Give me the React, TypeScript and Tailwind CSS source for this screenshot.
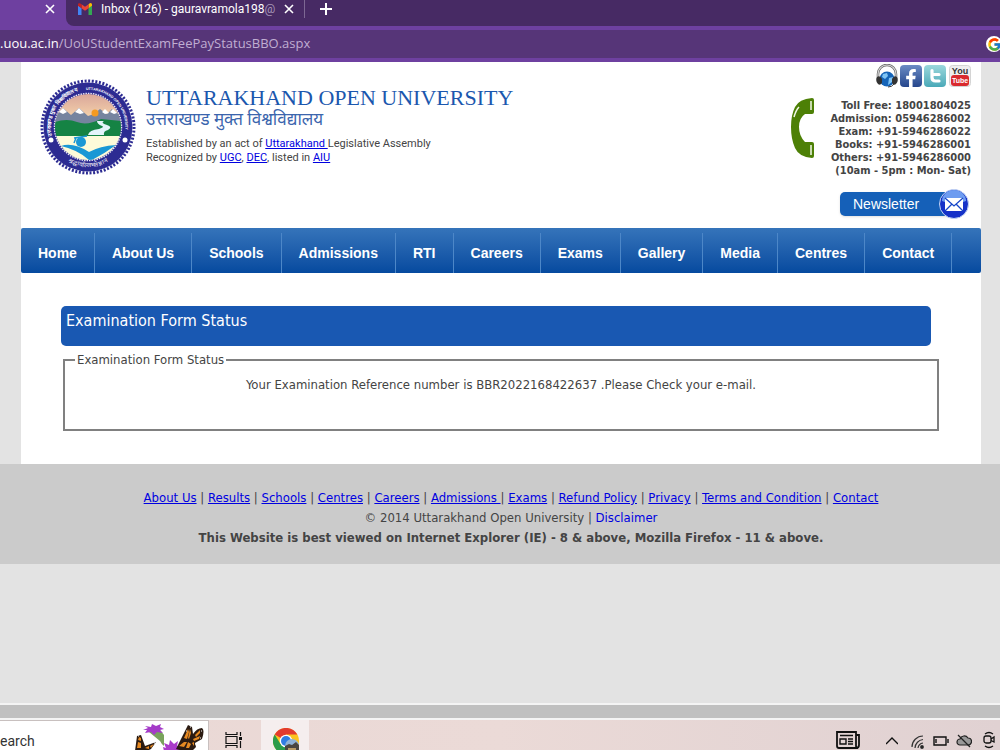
import React from "react"
import { FcGoogle } from "react-icons/fc"
import { FaFacebookF } from "react-icons/fa"

const navLinks = [
  "Home",
  "About Us",
  "Schools",
  "Admissions",
  "RTI",
  "Careers",
  "Exams",
  "Gallery",
  "Media",
  "Centres",
  "Contact",
]

const footerLinks = [
  "About Us",
  "Results",
  "Schools",
  "Centres",
  "Careers",
  "Admissions ",
  "Exams",
  "Refund Policy",
  "Privacy",
  "Terms and Condition",
  "Contact",
]

const phoneLines = [
  "Toll Free: 18001804025",
  "Admission: 05946286002",
  "Exam: +91-5946286022",
  "Books: +91-5946286001",
  "Others: +91-5946286000",
  "(10am - 5pm : Mon- Sat)",
]

const CloseIcon = () => (
  <svg className="h-3 w-3" viewBox="0 0 12 12" stroke="#fff" strokeWidth="1.600">
    <path d="M2 2l8 8M10 2l-8 8" />
  </svg>
)

const GmailIcon = () => (
  <svg className="h-3 w-4 shrink-0" viewBox="0 0 16 12">
    <path d="M1 12V2.500L4.500 5v7z" fill="#4285f4" />
    <path d="M11.500 12V5L15 2.500V12z" fill="#34a853" />
    <path d="M11.500 5.200V1.200l1.300-.9A1.500 1.500 0 0 1 15 1.600v1.200z" fill="#fbbc04" />
    <path d="M4.500 5.200v-4L8 3.800l3.500-2.600v4L8 7.800z" fill="#ea4335" />
    <path d="M1 2.800V1.600A1.500 1.500 0 0 1 3.300.4l1.200.8v4z" fill="#c5221f" />
  </svg>
)

const BrowserBar: React.FC = () => (
  <header className="bg-[#6e40a0] font-['Open_Sans',sans-serif]">
    <div className="flex h-[26px]">
      <div className="flex w-[66px] shrink-0 justify-end pt-[3px] pr-[10px]">
        <button className="h-3" aria-label="Close tab">
          <CloseIcon />
        </button>
      </div>
      <div className="flex flex-1 items-start rounded-bl-lg bg-[#472a64] text-white">
        <div className="flex h-[18px] w-[239px] shrink-0 items-center border-r border-[#7d6893] pl-[11px]">
          <GmailIcon />
          <a
            href="#inbox"
            className="ml-2 w-[180px] whitespace-nowrap font-['Roboto',sans-serif] text-xs"
          >
            Inbox (126) - gauravramola198<span className="text-[#a695b8]">@</span>
          </a>
          <button className="ml-[2px]" aria-label="Close inbox tab">
            <CloseIcon />
          </button>
        </div>
        <button className="ml-[15px] mt-[3px]" aria-label="New tab">
          <svg className="h-3 w-3" viewBox="0 0 12 12" stroke="#fff" strokeWidth="2">
            <path d="M6 0v12M0 6h12" />
          </svg>
        </button>
      </div>
    </div>
    <div className="py-1">
      <div className="flex h-7 items-center overflow-hidden bg-[#563578] text-[13px]">
        <label htmlFor="address" className="text-white">
          .uou.ac.in
        </label>
        <input
          id="address"
          className="min-w-0 flex-1 bg-transparent text-[#c0aed2] outline-none"
          defaultValue="/UoUStudentExamFeePayStatusBBO.aspx"
        />
        <div className="-mr-[2px] flex h-4 w-4 items-center justify-center rounded-full bg-white">
          <FcGoogle className="h-[15px] w-[15px]" />
        </div>
      </div>
    </div>
  </header>
)

const UniversityLogo = () => (
  <svg className="h-24 w-24 shrink-0" viewBox="0 0 96 96">
    <defs>
      <clipPath id="seal">
        <circle cx="48" cy="48" r="33" />
      </clipPath>
      <linearGradient id="dawn" x1="0" y1="0" x2="0" y2="1">
        <stop offset="0" stopColor="#d9a69a" />
        <stop offset="1" stopColor="#fbdcae" />
      </linearGradient>
      <path id="arc-left" d="M12 57A37 37 0 0 1 48 11" />
      <path id="arc-right" d="M46 11A37 37 0 0 1 84 58" />
      <path id="motto" d="M18 75A41 41 0 0 0 78 75" />
    </defs>
    <circle
      cx="48"
      cy="48"
      r="46"
      fill="none"
      stroke="#2c2b92"
      strokeWidth="3"
      strokeDasharray="2 1.610"
    />
    <circle cx="48" cy="48" r="44.500" fill="#2c2b92" />
    <circle
      cx="48"
      cy="48"
      r="33.500"
      fill="none"
      stroke="#e9e7f4"
      strokeWidth="1.500"
      strokeDasharray="1.500 1"
    />
    <g clipPath="url(#seal)">
      <path d="M15 15h66v29H15z" fill="url(#dawn)" />
      <path d="M15 38l8-9 8 7 8-7 9 8 6-2 6-5 7 5 5-5 10 8v12H15z" fill="#76849f" />
      <circle cx="55" cy="34" r="3.500" fill="#f59a20" />
      <path d="M19 33l4-4 4 4-4 2zM35 33l4-4 5 5-4 1zM62 33l3-3 4 4-4 1zM70 33l3-3 4 4-3 1z" fill="#fff" />
      <path d="M15 43q12-4 22 0t24-3l20 2v15H15z" fill="#158344" />
      <path d="M15 57h66v26H15z" fill="#fdfbd9" />
      <path d="M57 42h7q-4 2 3 4 6 2 1 5-5 1-4 5H48q1-5 11-6 6-2 3-3-5-2-5-5z" fill="#e4f4fb" />
      <path d="M21 67q12-4 28 6 11-6 27-7-12 9-26 16-11-11-29-15z" fill="#1a98d5" />
      <circle cx="41" cy="63" r="5" fill="#1a98d5" />
      <path d="M34 59l13-2M36 59l-2 5" stroke="#1a98d5" strokeWidth="1.500" />
    </g>
    <circle cx="11" cy="61" r="2.500" fill="#fff" />
    <circle cx="85" cy="61" r="2.500" fill="#fff" />
    <text fill="#fff" fontSize="5.400" fontWeight="bold">
      <textPath href="#arc-left">उत्तराखण्ड मुक्त विश्वविद्यालय</textPath>
    </text>
    <text fill="#fff" fontSize="3.700" fontWeight="bold" fontFamily="Liberation Sans">
      <textPath href="#arc-right">UTTARAKHAND OPEN UNIVERSITY</textPath>
    </text>
    <text fill="#fff" fontSize="6" textAnchor="middle">
      <textPath href="#motto" startOffset="50%">
        श्रद्धावाँल्लभते ज्ञानं
      </textPath>
    </text>
  </svg>
)

const HeadsetIcon = () => (
  <svg className="h-6 w-[22px]" viewBox="0 0 22 24">
    <circle cx="11" cy="15" r="7.500" fill="#1564b8" />
    <path d="M7 10l4-1 1 3-3 3-3-2zM13 14l4-1-1 5-4 3z" fill="#7fc4f4" />
    <path d="M2 15V10a9 9 0 0 1 18 0v5" fill="none" stroke="#666" strokeWidth="2.500" />
    <path d="M2 14V10a9 9 0 0 1 18 0v4" fill="none" stroke="#ddd" strokeWidth="1.200" />
    <path d="M1 13q3-2 5 2v4q-2 3-4 1-3-3-1-7zM21 13q-3-2-5 2v4q2 3 4 1 3-3 1-7z" fill="#333" />
    <path d="M18 20q-2 3-6 3" fill="none" stroke="#333" />
  </svg>
)

const PhoneIcon = () => (
  <svg className="h-[60px] w-6" viewBox="0 0 24 60">
    <path
      d="M21 0Q8 1 4 9 0 17 0 29T4 50q4 9 17 10 2 0 2-2V46q0-2-2-2h-7Q8 38 8 29t6-13h7q2 0 2-2V2q0-2-2-2z"
      fill="#4d8006"
    />
    <path d="M20 3v9M20 47v10M3 19q2-7 5-10" fill="none" stroke="#f2f7e8" strokeWidth="1.500" />
  </svg>
)

const SiteHeader: React.FC = () => (
  <div className="flex justify-between pl-[19px]">
    <div className="flex pt-[17px]">
      <UniversityLogo />
      <div className="ml-[10px] pt-1">
        <h1 className="font-['Liberation_Serif',serif] text-[22px] leading-[30px] text-[#1b57ae]">
          UTTARAKHAND OPEN UNIVERSITY
        </h1>
        <h2 className="font-['Noto_Sans_Devanagari','Noto_Sans',sans-serif] text-[17px] leading-4 text-[#3b65ad]">
          उत्तराखण्ड मुक्त विश्वविद्यालय
        </h2>
        <p className="mt-2 font-['Roboto',sans-serif] text-[11px] leading-[14px]">
          Established by an act of{" "}
          <a href="#uttarakhand" className="whitespace-pre text-[#0000e0] underline">
            {"Uttarakhand "}
          </a>
          Legislative Assembly
          <br />
          Recognized by{" "}
          <a href="#ugc" className="text-[#0000e0] underline">
            UGC
          </a>
          ,{" "}
          <a href="#dec" className="text-[#0000e0] underline">
            DEC
          </a>
          , listed in{" "}
          <a href="#aiu" className="text-[#0000e0] underline">
            AIU
          </a>
        </p>
      </div>
    </div>
    <div className="flex flex-col items-end pr-[10px] pt-[2px]">
      <div className="flex items-center gap-[2px]">
        <a href="#support" aria-label="Support">
          <HeadsetIcon />
        </a>
        <a
          href="#facebook"
          aria-label="Facebook"
          className="flex h-[22px] w-[22px] items-end justify-center rounded bg-linear-to-b from-[#6c8cc4] to-[#26468c]"
        >
          <FaFacebookF className="h-[18px] w-4 text-white" />
        </a>
        <a
          href="#twitter"
          aria-label="Twitter"
          className="flex h-[22px] w-[22px] items-center justify-center rounded bg-linear-to-b from-[#9ad8dc] to-[#49a9b8]"
        >
          <svg className="h-4 w-4" viewBox="0 0 16 16">
            <path
              d="M5 2.500v7q0 3.500 3.500 3.500H12M5 6.500h7"
              fill="none"
              stroke="#fff"
              strokeWidth="3.200"
              strokeLinecap="round"
            />
          </svg>
        </a>
        <a href="#youtube" aria-label="YouTube" className="ml-px">
          <svg className="h-[22px] w-[22px]" viewBox="0 0 22 22" fontFamily="Liberation Sans">
            <rect x=".5" y=".5" width="21" height="21" rx="3" fill="#eee" stroke="#d4d4d4" />
            <rect x="2" y="10" width="18" height="11" rx="3" fill="#d92a2e" />
            <text x="11" y="9" fontSize="9" fontWeight="bold" textAnchor="middle" fill="#333">
              You
            </text>
            <text x="11" y="18" fontSize="7" fontWeight="bold" textAnchor="middle" fill="#fff">
              Tube
            </text>
          </svg>
        </a>
      </div>
      <div className="mt-[10px] flex">
        <PhoneIcon />
        <div className="ml-[15px] pt-px text-right text-[11px] font-bold leading-[13px]">
          {phoneLines.map((line) => (
            <div key={line}>{line}</div>
          ))}
        </div>
      </div>
      <a href="#newsletter" className="mt-3 mr-px flex items-center">
        <span className="-mr-4 flex h-6 w-[114px] items-center rounded-[5px] bg-[#1560b8] pl-[13px] font-['Liberation_Sans',sans-serif] text-sm text-white shadow">
          Newsletter
        </span>
        <svg className="h-[30px] w-8" viewBox="0 0 32 30">
          <circle cx="16" cy="15" r="14.500" fill="#1531c8" stroke="#c4d6f3" strokeWidth="1" />
          <path d="M4 12a12 11 0 0 1 24 0q-12 5-24 0z" fill="#6d9cf0" />
          <path d="M7 9h18v13H7z" fill="#fff" />
          <path d="M7 9l9 8 9-8M7 22l7-7M25 22l-7-7" fill="none" stroke="#1545c8" strokeWidth="1.300" />
        </svg>
      </a>
    </div>
  </div>
)

const SiteNav: React.FC = () => (
  <nav className="mt-[9px] flex h-[45px] items-end rounded-[2px] bg-linear-to-b from-[#3574ba] to-[#054a9f] font-['Liberation_Sans',sans-serif] text-sm font-bold text-white">
    {navLinks.map((link) => (
      <a
        key={link}
        href={"#" + link}
        className="flex h-10 items-center whitespace-nowrap border-r border-[#4d87c8] px-[17px]"
      >
        {link}
      </a>
    ))}
  </nav>
)

const SiteFooter: React.FC = () => (
  <footer className="h-[100px] bg-[#cbcbcb] pt-6 pl-[22px] text-center text-[13px] leading-5">
    <div>
      {footerLinks.map((link, i) => (
        <React.Fragment key={link}>
          {i > 0 && (link === "Exams" ? "| " : " | ")}
          <a href={"#" + link.trim()} className="whitespace-pre text-[#0000e0] underline">
            {link}
          </a>
        </React.Fragment>
      ))}
    </div>
    <div>
      © 2014 Uttarakhand Open University |{" "}
      <a href="#disclaimer" className="text-[#0000e0]">
        Disclaimer
      </a>
    </div>
    <div className="font-bold">
      This Website is best viewed on Internet Explorer (IE) - 8 &amp; above, Mozilla Firefox - 11
      &amp; above.
    </div>
  </footer>
)

const Butterflies = () => (
  <svg className="h-7 w-[70px]" viewBox="0 0 70 28">
    <path d="M15 9l11-2 4 5v11q-2-1-4-5z" fill="#79a35c" />
    <path d="M9 7l5-2-3-2 6 1 1-3 4 2 5-2-1 3 4 2-4 1 3 3-6-1-3 3-3-3-6 1 2-3z" fill="#a43bc8" />
    <path d="M30 28l-1-4 3 1-2-5 5 2 1-5 4 4 4-3-1 5 4-1-2 6z" fill="#a93bc9" />
    <path d="M42 26L54 2l4 2 1 7q4-6 9-6 3 2 0 11l-7 4 1 4-4 4h-9z" fill="#2b1b12" />
    <path
      d="M50 15l4-9 1 3-2 7zM56 6l1 4-2 6-1-1zM61 12l5-5v3l-4 4zM59 16l7-3-1 3-5 2zM45 23l5-4h3l-3 5zM52 25l2-6 3 2-2 4zM58 20l2-1v4z"
      fill="#e78a22"
    />
    <path d="M1 28l2-15 4-1 4 11 11-4-5 7-4 2z" fill="#2b1b12" />
    <path d="M3 25l1-6 3 1v5zM4 17l1-3 2 1v3zM11 25l4-2v3zM16 23l4-2-3 4z" fill="#e78a22" />
    <path d="M52 8h1M56 4h1M67 8h1M66 15h1M61 21h1M4 13h1M20 20h1" stroke="#fff" />
  </svg>
)

const ChromeIcon = () => (
  <svg className="h-[26px] w-[26px]" viewBox="0 0 26 26">
    <circle cx="13" cy="13" r="13" fill="#fcc31e" />
    <path d="M13 13L1.700 6.500A13 13 0 0 1 24.300 6.500H13z" fill="#e33b2e" />
    <path d="M1.700 6.500A13 13 0 0 0 13 26l5.500-10L13 13 7.500 16z" fill="#2a9c4a" />
    <circle cx="13" cy="13" r="6.300" fill="#fff" />
    <circle cx="13" cy="13" r="5" fill="#2f7de1" />
    <circle cx="19" cy="18" r="7" fill="#8eb2d6" />
    <path d="M12 18l4-2 3 1 4-3 3 3v6H12z" fill="#4a4640" />
    <path d="M15 20h8v6h-8z" fill="#b99b64" />
  </svg>
)

const Taskbar: React.FC = () => (
  <div className="flex h-[30px] items-start overflow-hidden bg-linear-to-r from-[#ead8d5] via-[#ebdad7] to-[#e0d1d2] font-['Open_Sans',sans-serif]">
    <div className="flex h-[30px] w-[209px] items-start justify-between border-t border-r border-[#c8c0bf] bg-white pr-1">
      <input
        aria-label="Search"
        defaultValue="earch"
        className="w-24 pt-[10px] font-['Roboto',sans-serif] text-sm text-[#333] outline-none"
      />
      <div className="pt-[2px]">
        <Butterflies />
      </div>
    </div>
    <button className="ml-4 pt-3" aria-label="Task view">
      <svg className="h-4 w-[18px]" viewBox="0 0 18 16" fill="none" stroke="#111" strokeWidth="1.200">
        <path d="M1 0v2.500h11V0M1 4.500h11v7H1zM1 16v-2.500h11V16M15.500 0v4M15.500 9v7" />
        <path d="M14 5h3v3h-3z" fill="#111" stroke="none" />
      </svg>
    </button>
    <button className="ml-[18px] h-[30px] w-12 bg-[#f5eeee] pt-2 pl-3" aria-label="Chrome">
      <ChromeIcon />
    </button>
    <div className="ml-auto flex items-start pt-[11px] pr-[5px]">
      <svg className="h-[18px] w-6" viewBox="0 0 24 18" fill="none" stroke="#111" strokeWidth="1.800">
        <path d="M20 4h3v10q0 3-3 3H3q-2 0-2-2V1h19v14q0 2 2 2" />
        <path d="M4 4.500h13M4 8h6v5H4zM12 8h5M12 10.500h5M12 13h5" strokeWidth="1.400" />
      </svg>
      <svg className="ml-[26px] mt-1 h-3 w-3" viewBox="0 0 12 12" fill="none" stroke="#111" strokeWidth="1.400">
        <path d="M0 9l6-6 6 6" />
      </svg>
      <svg className="ml-[13px] mt-1 h-[14px] w-[14px]" viewBox="0 0 14 14" fill="none" stroke="#333" strokeWidth="1.200">
        <path d="M1 12A11 11 0 0 1 12 1M4 13A9 9 0 0 1 12 4.500M7 13A6 6 0 0 1 12 8" />
        <circle cx="11" cy="12" r="1.300" fill="#111" />
      </svg>
      <svg className="ml-2 mt-[5px] h-[10px] w-4" viewBox="0 0 16 10" fill="none" stroke="#111" strokeWidth="1.400">
        <path d="M1 1h12v8H1zM15 3v4" />
        <path d="M3 3v4" />
      </svg>
      <svg className="ml-[7px] mt-[3px] h-[14px] w-4" viewBox="0 0 16 14" fill="#999" stroke="#222" strokeWidth="1.200">
        <path d="M4 11a3 3 0 0 1 0-6 4.500 4.500 0 0 1 8-1 3.500 3.500 0 0 1 0 7z" />
        <path d="M2 1l12 12" />
      </svg>
      <svg className="ml-[11px] h-[18px] w-3" viewBox="0 0 12 18" fill="none" stroke="#111" strokeWidth="1.300">
        <rect x="1" y="5" width="7" height="7" rx="2" />
        <path d="M8 8l3-2v5L8 9.500M2 3q4-3 8 0M2 15q4 3 8 0" />
      </svg>
    </div>
  </div>
)

export default function App() {
  return (
    <div className="flex min-h-screen flex-col bg-[#e3e3e3] font-['DejaVu_Sans_Condensed','DejaVu_Sans',sans-serif] text-[#444]">
      <BrowserBar />
      <main className="ml-[21px] mr-[19px] bg-white pb-[33px]">
        <SiteHeader />
        <SiteNav />
        <section className="ml-10 mr-[42px] mt-[33px]">
          <h3 className="mr-2 h-10 rounded-[5px] bg-[#1958b2] pl-[5px] pt-[3px] text-base text-white">
            Examination Form Status
          </h3>
          <fieldset className="ml-[2px] mt-[6px] h-[79px] border-2 border-[#808080] px-[10px] text-[13px]">
            <legend className="px-[2px] leading-4">Examination Form Status</legend>
            <p className="pt-[9px] text-center leading-4">
              Your Examination Reference number is BBR2022168422637 .Please Check your e-mail.
            </p>
          </fieldset>
        </section>
      </main>
      <SiteFooter />
      <div className="mt-auto">
        <div className="h-[17px] border-y-2 border-[#f4f4f4] bg-[#c0c0c0]" />
        <Taskbar />
      </div>
    </div>
  )
}
